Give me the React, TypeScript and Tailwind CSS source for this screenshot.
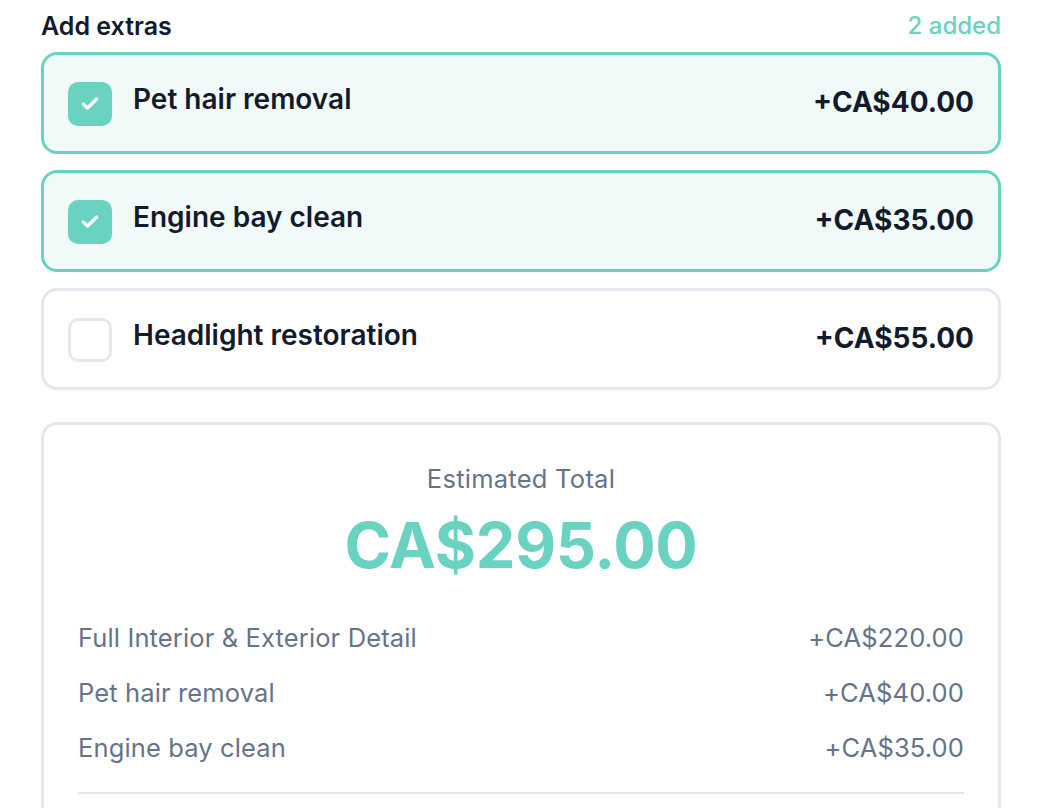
import { Check } from 'lucide-react'

interface Extra {
  name: string
  price: string
  selected: boolean
}

const extras: Extra[] = [
  { name: 'Pet hair removal', price: '+CA$40.00', selected: true },
  { name: 'Engine bay clean', price: '+CA$35.00', selected: true },
  { name: 'Headlight restoration', price: '+CA$55.00', selected: false },
]

const lines = [
  { name: 'Full Interior & Exterior Detail', price: '+CA$220.00' },
  { name: 'Pet hair removal', price: '+CA$40.00' },
  { name: 'Engine bay clean', price: '+CA$35.00' },
]

function ExtraCard({ extra }: { extra: Extra }) {
  return (
    <div
      className={
        extra.selected
          ? 'flex items-start justify-between h-[102px] px-[24px] pt-[26px] rounded-[16px] border-[3px] border-[#6ad2c0] bg-[#f1faf8]'
          : 'flex items-start justify-between h-[102px] px-[24px] pt-[26px] rounded-[16px] border-[3px] border-[#e3e8ef] bg-white'
      }
    >
      <div className="flex items-start gap-[21px]">
        {extra.selected ? (
          <div className="flex items-center justify-center w-[44px] h-[44px] rounded-[10px] bg-[#6ad2c0] mt-[1px]">
            <Check size={20} strokeWidth={4} className="text-white" />
          </div>
        ) : (
          <div className="w-[44px] h-[44px] rounded-[10px] border-[3px] border-[#e3e8ef] bg-white mt-[1px]" />
        )}
        <span className="text-[28px] leading-[36px] font-semibold text-[#131a2c]">{extra.name}</span>
      </div>
      <span className="text-[28px] leading-[36px] font-bold text-[#131a2c] mt-[3px]">{extra.price}</span>
    </div>
  )
}

export default function App() {
  return (
    <div className="min-h-screen bg-white px-[41px]" style={{ fontFamily: 'Inter, sans-serif' }}>
      <div className="flex items-center justify-between pt-[10px] pb-[10px]">
        <span className="text-[25px] leading-[32px] font-semibold text-[#131a2c]">Add extras</span>
        <span className="text-[24px] leading-[32px] font-medium text-[#6ad2c0]">2 added</span>
      </div>
      <div className="flex flex-col gap-[16px]">
        {extras.map((e) => (
          <ExtraCard key={e.name} extra={e} />
        ))}
      </div>
      <div className="mt-[32px] rounded-[16px] border-[3px] border-[#e3e8ef] px-[34px] pt-[38px] pb-[40px]">
        <div className="text-center text-[25.5px] leading-[32px] tracking-[0.01em] text-[#667389]">Estimated Total</div>
        <div className="text-center text-[63px] leading-[80px] font-bold tracking-[-0.005em] text-[#6ad2c0] mt-[10px]">CA$295.00</div>
        <div className="flex flex-col mt-[26px]">
          {lines.map((l) => (
            <div key={l.name} className="flex items-center justify-between h-[55px] text-[25.5px] tracking-[0.005em] text-[#667389]">
              <span>{l.name}</span>
              <span>{l.price}</span>
            </div>
          ))}
        </div>
        <div className="h-[2px] bg-[#e3e8ef] mt-[16px]" />
      </div>
    </div>
  )
}
